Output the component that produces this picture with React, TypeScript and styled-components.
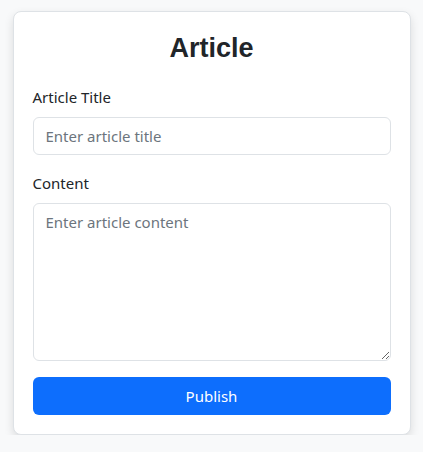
import styled, { createGlobalStyle } from "styled-components";

const GlobalStyle = createGlobalStyle`
  * {
    box-sizing: border-box;
  }
  body {
    margin: 0;
    background-color: #f8f9fa;
    font-family: "Noto Sans", "Liberation Sans", sans-serif;
    color: #212529;
  }
`;

const App = () => {
  return (
    <>
      <GlobalStyle />
      <Page>
        <Card>
          <Title>Article</Title>
          <Field>
            <Label htmlFor="title">Article Title</Label>
            <Input id="title" type="text" placeholder="Enter article title" />
          </Field>
          <Field>
            <Label htmlFor="content">Content</Label>
            <TextArea id="content" placeholder="Enter article content" />
          </Field>
          <Publish>Publish</Publish>
        </Card>
      </Page>
    </>
  );
};

export default App;

const Page = styled.div`
  display: flex;
  justify-content: center;
  padding-top: 11px;
`;

const Card = styled.div`
  width: 398px;
  background-color: white;
  border: 1px solid #dee2e6;
  border-radius: 8px;
  box-shadow: 0 4px 10px rgba(0, 0, 0, 0.12);
  padding: 20px 19px 19px;
  display: flex;
  flex-direction: column;
`;

const Title = styled.h2`
  margin: 0 0 21px;
  text-align: center;
  font-family: "Liberation Sans", Arial, sans-serif;
  font-size: 27px;
  font-weight: bold;
  line-height: 32px;
`;

const Field = styled.div`
  display: flex;
  flex-direction: column;
  margin-bottom: 16px;
`;

const Label = styled.label`
  font-size: 15px;
  line-height: 24px;
  margin-bottom: 8px;
`;

const Input = styled.input`
  height: 38px;
  padding: 6px 12px;
  font-family: inherit;
  font-size: 15px;
  color: #212529;
  border: 1px solid #dee2e6;
  border-radius: 6px;
  outline: none;

  &::placeholder {
    color: #6c757d;
  }
`;

const TextArea = styled.textarea`
  height: 158px;
  padding: 6px 12px;
  font-family: inherit;
  font-size: 15px;
  line-height: 24px;
  color: #212529;
  border: 1px solid #dee2e6;
  border-radius: 6px;
  outline: none;

  &::placeholder {
    color: #6c757d;
  }
`;

const Publish = styled.button`
  height: 38px;
  border: none;
  border-radius: 6px;
  background-color: #0d6efd;
  color: white;
  font-family: inherit;
  font-size: 15px;
  cursor: pointer;
`;
